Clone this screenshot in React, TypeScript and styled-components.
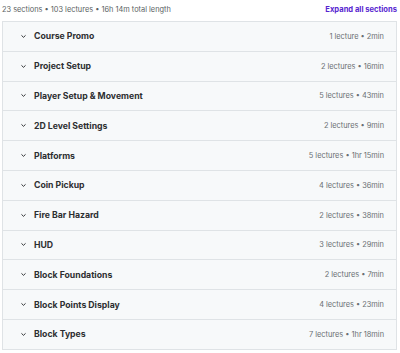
import React from "react";
import styled, { createGlobalStyle } from "styled-components";

const Global = createGlobalStyle`
  html, body { margin: 0; padding: 0; background: #ffffff; }
  body { font-family: Inter, "Noto Sans", sans-serif; }
`;

const Page = styled.div`
  width: 400px;
  padding: 0 3px 0 2px;
  box-sizing: border-box;
`;

const Header = styled.div`
  height: 21px;
  display: flex;
  align-items: center;
  justify-content: space-between;
  padding-bottom: 2px;
  box-sizing: border-box;
`;

const Summary = styled.span`
  font-size: 7.4px;
  color: #5b5f63;
`;

const Expand = styled.button`
  border: 0;
  background: none;
  padding: 0;
  font-family: inherit;
  font-size: 7.6px;
  font-weight: 700;
  color: #5624d0;
  cursor: pointer;
`;

const List = styled.div`
  border: 1px solid #dfe3e6;
  border-bottom: 0;
`;

const Row = styled.div`
  height: 28.8px;
  display: flex;
  align-items: center;
  background: #f7f9fa;
  border-bottom: 1px solid #dfe3e6;
  padding: 0 12px 0 17px;
`;

const Chevron = styled.svg`
  width: 7px;
  height: 7px;
  margin-right: 7px;
  flex: none;
`;

const Title = styled.span`
  flex: 1;
  font-size: 8.7px;
  font-weight: 700;
  color: #2d2f31;
`;

const Meta = styled.span`
  font-size: 7.4px;
  color: #6a6f73;
`;

const sections: [string, string][] = [
  ["Course Promo", "1 lecture • 2min"],
  ["Project Setup", "2 lectures • 16min"],
  ["Player Setup & Movement", "5 lectures • 43min"],
  ["2D Level Settings", "2 lectures • 9min"],
  ["Platforms", "5 lectures • 1hr 15min"],
  ["Coin Pickup", "4 lectures • 36min"],
  ["Fire Bar Hazard", "2 lectures • 38min"],
  ["HUD", "3 lectures • 29min"],
  ["Block Foundations", "2 lectures • 7min"],
  ["Block Points Display", "4 lectures • 23min"],
  ["Block Types", "7 lectures • 1hr 18min"],
];

export default function App() {
  return (
    <>
      <Global />
      <Page>
        <Header>
          <Summary>23 sections • 103 lectures • 16h 14m total length</Summary>
          <Expand>Expand all sections</Expand>
        </Header>
        <List>
          {sections.map(([t, m]) => (
            <Row key={t}>
              <Chevron viewBox="0 0 10 10">
                <path d="M2.5 3.8 L5 6.2 L7.5 3.8" fill="none" stroke="#2d2f31" strokeWidth="1.4" strokeLinecap="round" strokeLinejoin="round" />
              </Chevron>
              <Title>{t}</Title>
              <Meta>{m}</Meta>
            </Row>
          ))}
        </List>
      </Page>
    </>
  );
}
